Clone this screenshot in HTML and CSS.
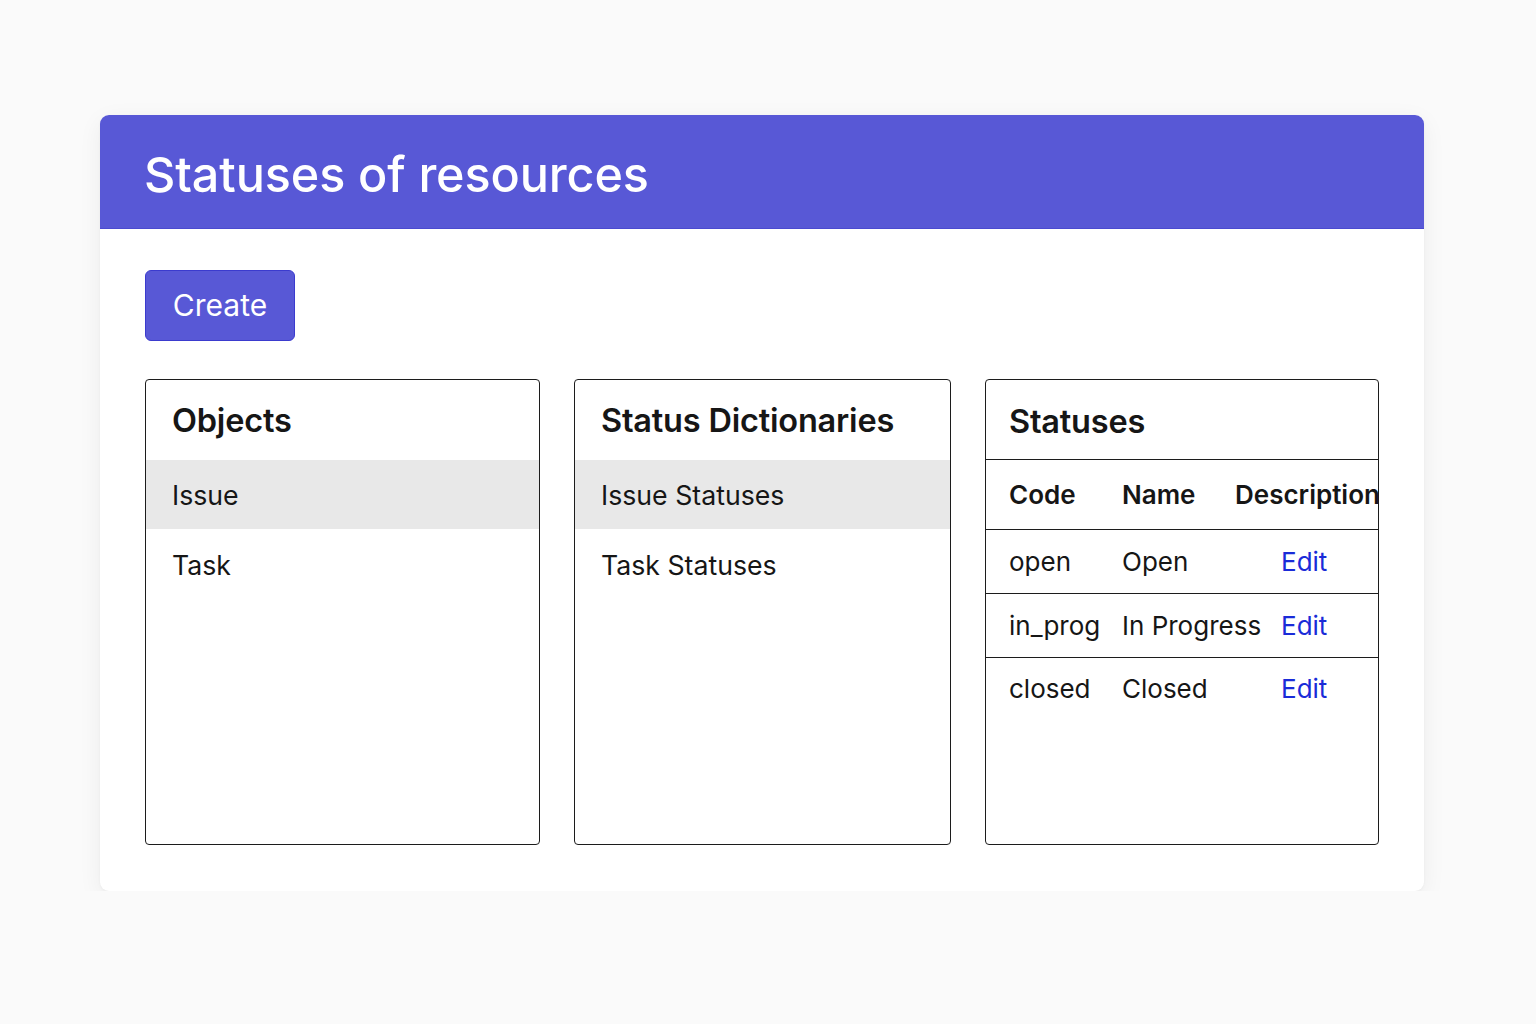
FILE: index.html
```html
<!DOCTYPE html>
<html>
<head>
<meta charset="utf-8">
<link rel="stylesheet" href="styles.css">
</head>
<body>
<main class="card">
  <header class="card-head"><h1>Statuses of resources</h1></header>
  <div class="card-body">
    <button class="btn">Create</button>
    <div class="panels">
      <section class="panel">
        <h2 class="panel-title">Objects</h2>
        <div class="item active">Issue</div>
        <div class="item">Task</div>
      </section>
      <section class="panel">
        <h2 class="panel-title">Status Dictionaries</h2>
        <div class="item active">Issue Statuses</div>
        <div class="item">Task Statuses</div>
      </section>
      <section class="panel">
        <h2 class="panel-title bordered">Statuses</h2>
        <div class="trow thead">
          <span>Code</span><span>Name</span><span>Description</span>
        </div>
        <div class="trow">
          <span>open</span><span>Open</span><span class="edit"><a href="#">Edit</a></span>
        </div>
        <div class="trow">
          <span>in_prog</span><span>In Progress</span><span class="edit"><a href="#">Edit</a></span>
        </div>
        <div class="trow last">
          <span>closed</span><span>Closed</span><span class="edit"><a href="#">Edit</a></span>
        </div>
      </section>
    </div>
  </div>
</main>
</body>
</html>
```

FILE: styles.css
```css
* { box-sizing: border-box; }
html, body { margin: 0; padding: 0; }
body {
  background: #fafafa;
  font-family: Inter, "Noto Sans", Roboto, sans-serif;
  color: #161616;
  padding: 115px 112px 0 100px;
}
.card {
  width: 1324px;
  height: 776px;
  background: #fff;
  border-radius: 9px;
  box-shadow: 0 6px 24px rgba(0,0,0,0.06), 0 1px 3px rgba(0,0,0,0.04);
  overflow: hidden;
}
.card-head {
  height: 114px;
  background: #5858d6;
  border-bottom: 1px solid #4a4ad0;
  display: flex;
  align-items: center;
  padding: 0 44px;
}
.card-head h1 {
  margin: 0;
  color: #fff;
  font-size: 48.5px;
  font-weight: 500;
  letter-spacing: -0.1px;
  padding-top: 5px;
}
.card-body {
  padding: 41px 45px 0 45px;
}
.btn {
  display: block;
  width: 150px;
  height: 71px;
  background: #5858d6;
  border: 1px solid #3b3bce;
  border-radius: 6px;
  color: #fff;
  font-family: inherit;
  font-size: 30px;
  font-weight: 400;
  padding: 0 0 2px 0;
}
.panels {
  margin-top: 38px;
  display: grid;
  grid-template-columns: 395px 377px 394px;
  column-gap: 34px;
}
.panel {
  height: 466px;
  border: 1.5px solid #1c1c1c;
  border-radius: 4px;
  overflow: hidden;
  font-size: 26.7px;
}
.panel-title {
  margin: 0;
  height: 78.5px;
  display: flex;
  align-items: center;
  padding: 3px 26px 0 26px;
  font-size: 32.5px;
  font-weight: 600;
  letter-spacing: -0.2px;
}
.panel-title + .item { margin-top: 1.5px; }
.panel-title.bordered {
  border-bottom: 1.5px solid #1c1c1c;
  height: 80px;
  padding-left: 23px;
}
.item {
  height: 69px;
  display: flex;
  align-items: center;
  padding: 0 26px;
}
.item + .item { padding-top: 3px; }
.item.active { background: #e8e8e8; }
.trow {
  display: grid;
  grid-template-columns: 113px 113px 1fr;
  align-items: center;
  height: 64px;
  padding-left: 23px;
  border-bottom: 1.5px solid #1c1c1c;
  white-space: nowrap;
  font-size: 26px;
}
.trow.thead {
  height: 70px;
  font-weight: 600;
}
.trow.last { border-bottom: none; padding-bottom: 3px; }
.edit { padding-left: 46px; }
.edit a { color: #1a2bd8; text-decoration: none; }
```
